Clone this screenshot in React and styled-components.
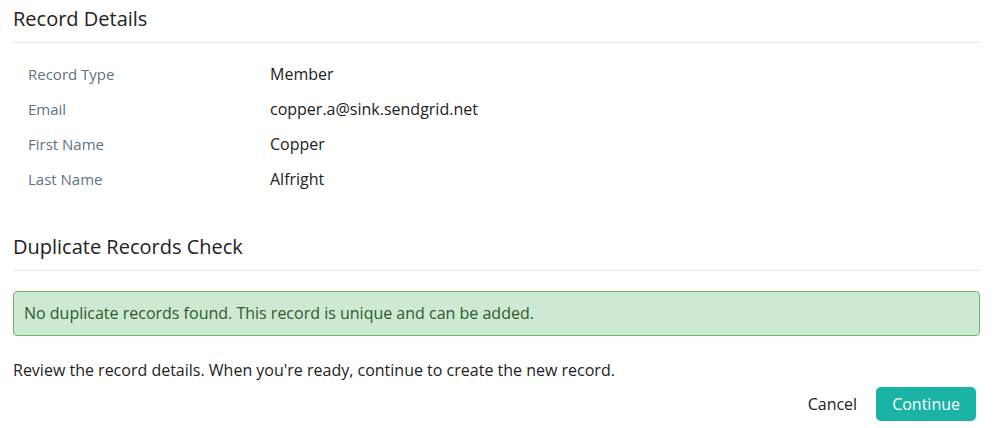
import React from 'react';
import styled, { createGlobalStyle } from 'styled-components';

const GlobalStyle = createGlobalStyle`
  html, body {
    margin: 0;
    padding: 0;
    background: #ffffff;
  }
  body {
    font-family: "Open Sans", "Noto Sans", sans-serif;
    color: #222222;
  }
`;

const Page = styled.div`
  padding: 0px 14px 0px 13px;
`;

const Section = styled.section`
  display: flex;
  flex-direction: column;
  margin-top: ${({ spaced }) => (spaced ? '32px' : '0px')};
`;

const Heading = styled.h2`
  margin: 0px;
  padding: 8px 0px 12px;
  font-size: 20px;
  font-weight: 400;
  line-height: 22px;
  color: #222222;
  border-bottom: 1px solid #e6e6e6;
`;

const DetailList = styled.dl`
  display: grid;
  grid-template-columns: 242px 1fr;
  grid-auto-rows: 35px;
  align-items: center;
  margin: 13px 0px 0px;
  padding: 0px 15px;
`;

const Label = styled.dt`
  font-size: 15px;
  color: #5e7384;
`;

const Value = styled.dd`
  margin: 0px;
  font-size: 16px;
  color: #222222;
`;

const Alert = styled.div`
  margin-top: 20px;
  padding: 11px 10px 12px;
  font-size: 16px;
  line-height: 20px;
  color: #2f5a2f;
  background: #cde9d1;
  border: 1px solid #6dba6d;
  border-radius: 4px;
`;

const Note = styled.p`
  margin: 24px 0px 0px;
  font-size: 16px;
  line-height: 20px;
  color: #222222;
`;

const Actions = styled.div`
  display: flex;
  justify-content: flex-end;
  align-items: center;
  gap: 19px;
  margin-top: 7px;
  padding-right: 4px;
`;

const Button = styled.button`
  font-family: inherit;
  font-size: 16px;
  line-height: 20px;
  border: none;
  border-radius: 5px;
  cursor: pointer;
  padding: ${({ primary }) => (primary ? '7px 16px' : '7px 0px')};
  color: ${({ primary }) => (primary ? '#ffffff' : '#222222')};
  background: ${({ primary }) => (primary ? '#1ab3a6' : 'transparent')};
`;

const details = [
  { label: 'Record Type', value: 'Member' },
  { label: 'Email', value: 'copper.a@sink.sendgrid.net' },
  { label: 'First Name', value: 'Copper' },
  { label: 'Last Name', value: 'Alfright' },
];

export default function App() {
  return (
    <Page>
      <GlobalStyle />
      <Section>
        <Heading>Record Details</Heading>
        <DetailList>
          {details.map(({ label, value }) => (
            <React.Fragment key={label}>
              <Label>{label}</Label>
              <Value>{value}</Value>
            </React.Fragment>
          ))}
        </DetailList>
      </Section>
      <Section spaced>
        <Heading>Duplicate Records Check</Heading>
        <Alert>No duplicate records found. This record is unique and can be added.</Alert>
        <Note>Review the record details. When you're ready, continue to create the new record.</Note>
        <Actions>
          <Button>Cancel</Button>
          <Button primary>Continue</Button>
        </Actions>
      </Section>
    </Page>
  );
}
